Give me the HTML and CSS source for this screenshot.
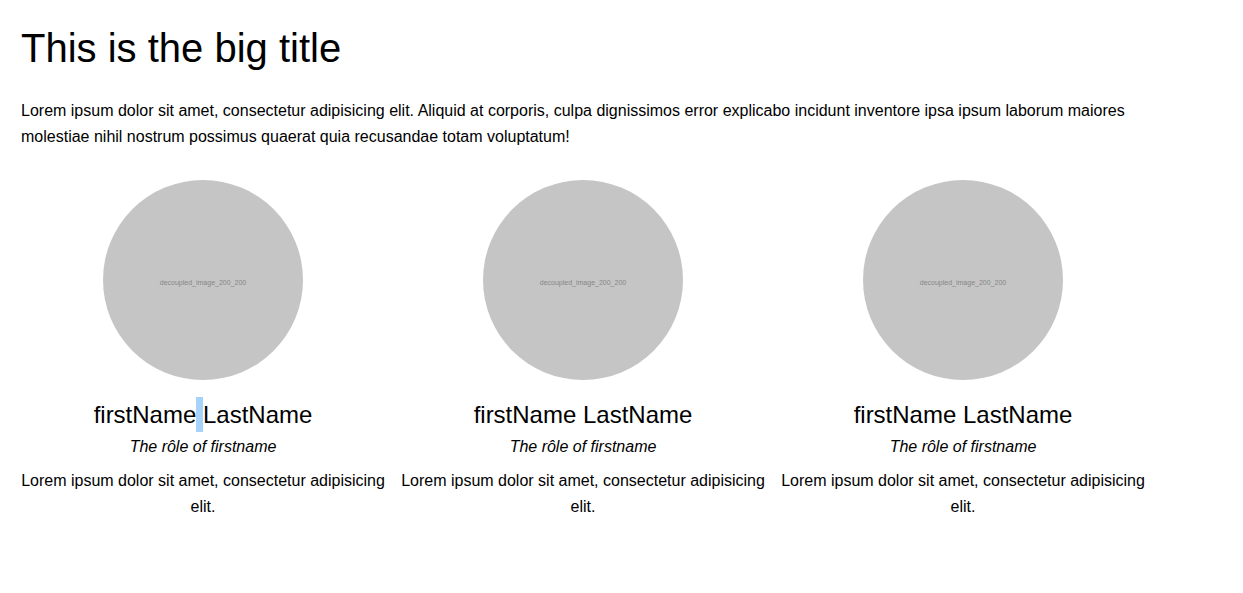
FILE: index.html
```html
<!DOCTYPE html>
<html lang="en">
<head>
<meta charset="utf-8">
<title>Team</title>
<link rel="stylesheet" href="styles.css">
</head>
<body>
<main class="page">
  <h1 class="title">This is the big title</h1>
  <p class="intro">Lorem ipsum dolor sit amet, consectetur adipisicing elit. Aliquid at corporis, culpa dignissimos error explicabo incidunt inventore ipsa ipsum laborum maiores molestiae nihil nostrum possimus quaerat quia recusandae totam voluptatum!</p>
  <section class="team">
    <article class="member">
      <div class="avatar"><span class="avatar-label">decoupled_image_200_200</span></div>
      <h2 class="name">firstName<span class="sel"> </span>LastName</h2>
      <p class="role">The rôle of firstname</p>
      <p class="desc">Lorem ipsum dolor sit amet, consectetur adipisicing elit.</p>
    </article>
    <article class="member">
      <div class="avatar"><span class="avatar-label">decoupled_image_200_200</span></div>
      <h2 class="name">firstName LastName</h2>
      <p class="role">The rôle of firstname</p>
      <p class="desc">Lorem ipsum dolor sit amet, consectetur adipisicing elit.</p>
    </article>
    <article class="member">
      <div class="avatar"><span class="avatar-label">decoupled_image_200_200</span></div>
      <h2 class="name">firstName LastName</h2>
      <p class="role">The rôle of firstname</p>
      <p class="desc">Lorem ipsum dolor sit amet, consectetur adipisicing elit.</p>
    </article>
  </section>
</main>
</body>
</html>
```

FILE: styles.css
```css
html, body {
  margin: 0;
  padding: 0;
  background: #fff;
}
body {
  font-family: "Liberation Sans", Arial, sans-serif;
  color: #000;
  font-size: 16px;
  line-height: 26px;
}
.page {
  padding: 25px 21px;
  max-width: 1124px;
}
.title {
  font-size: 40px;
  font-weight: normal;
  line-height: 46px;
  margin: 0 0 27px 0;
}
.intro {
  margin: 0 0 30px 0;
}
.team {
  display: grid;
  grid-template-columns: repeat(3, 364px);
  column-gap: 16px;
}
.member {
  display: flex;
  flex-direction: column;
  align-items: center;
  text-align: center;
}
.avatar {
  width: 200px;
  height: 200px;
  border-radius: 50%;
  background: #c5c5c5;
  display: flex;
  align-items: center;
  justify-content: center;
}
.avatar-label {
  font-size: 7px;
  line-height: 8px;
  color: #858585;
  margin-top: 6px;
}
.name {
  font-size: 24px;
  font-weight: normal;
  line-height: 36px;
  margin: 17px 0 0 0;
}
.sel {
  background: #a6d3fb;
  padding: 4px 0;
}
.role {
  font-style: italic;
  margin: 1px 0 0 0;
  line-height: 26px;
}
.desc {
  margin: 8px 0 0 0;
}
```
